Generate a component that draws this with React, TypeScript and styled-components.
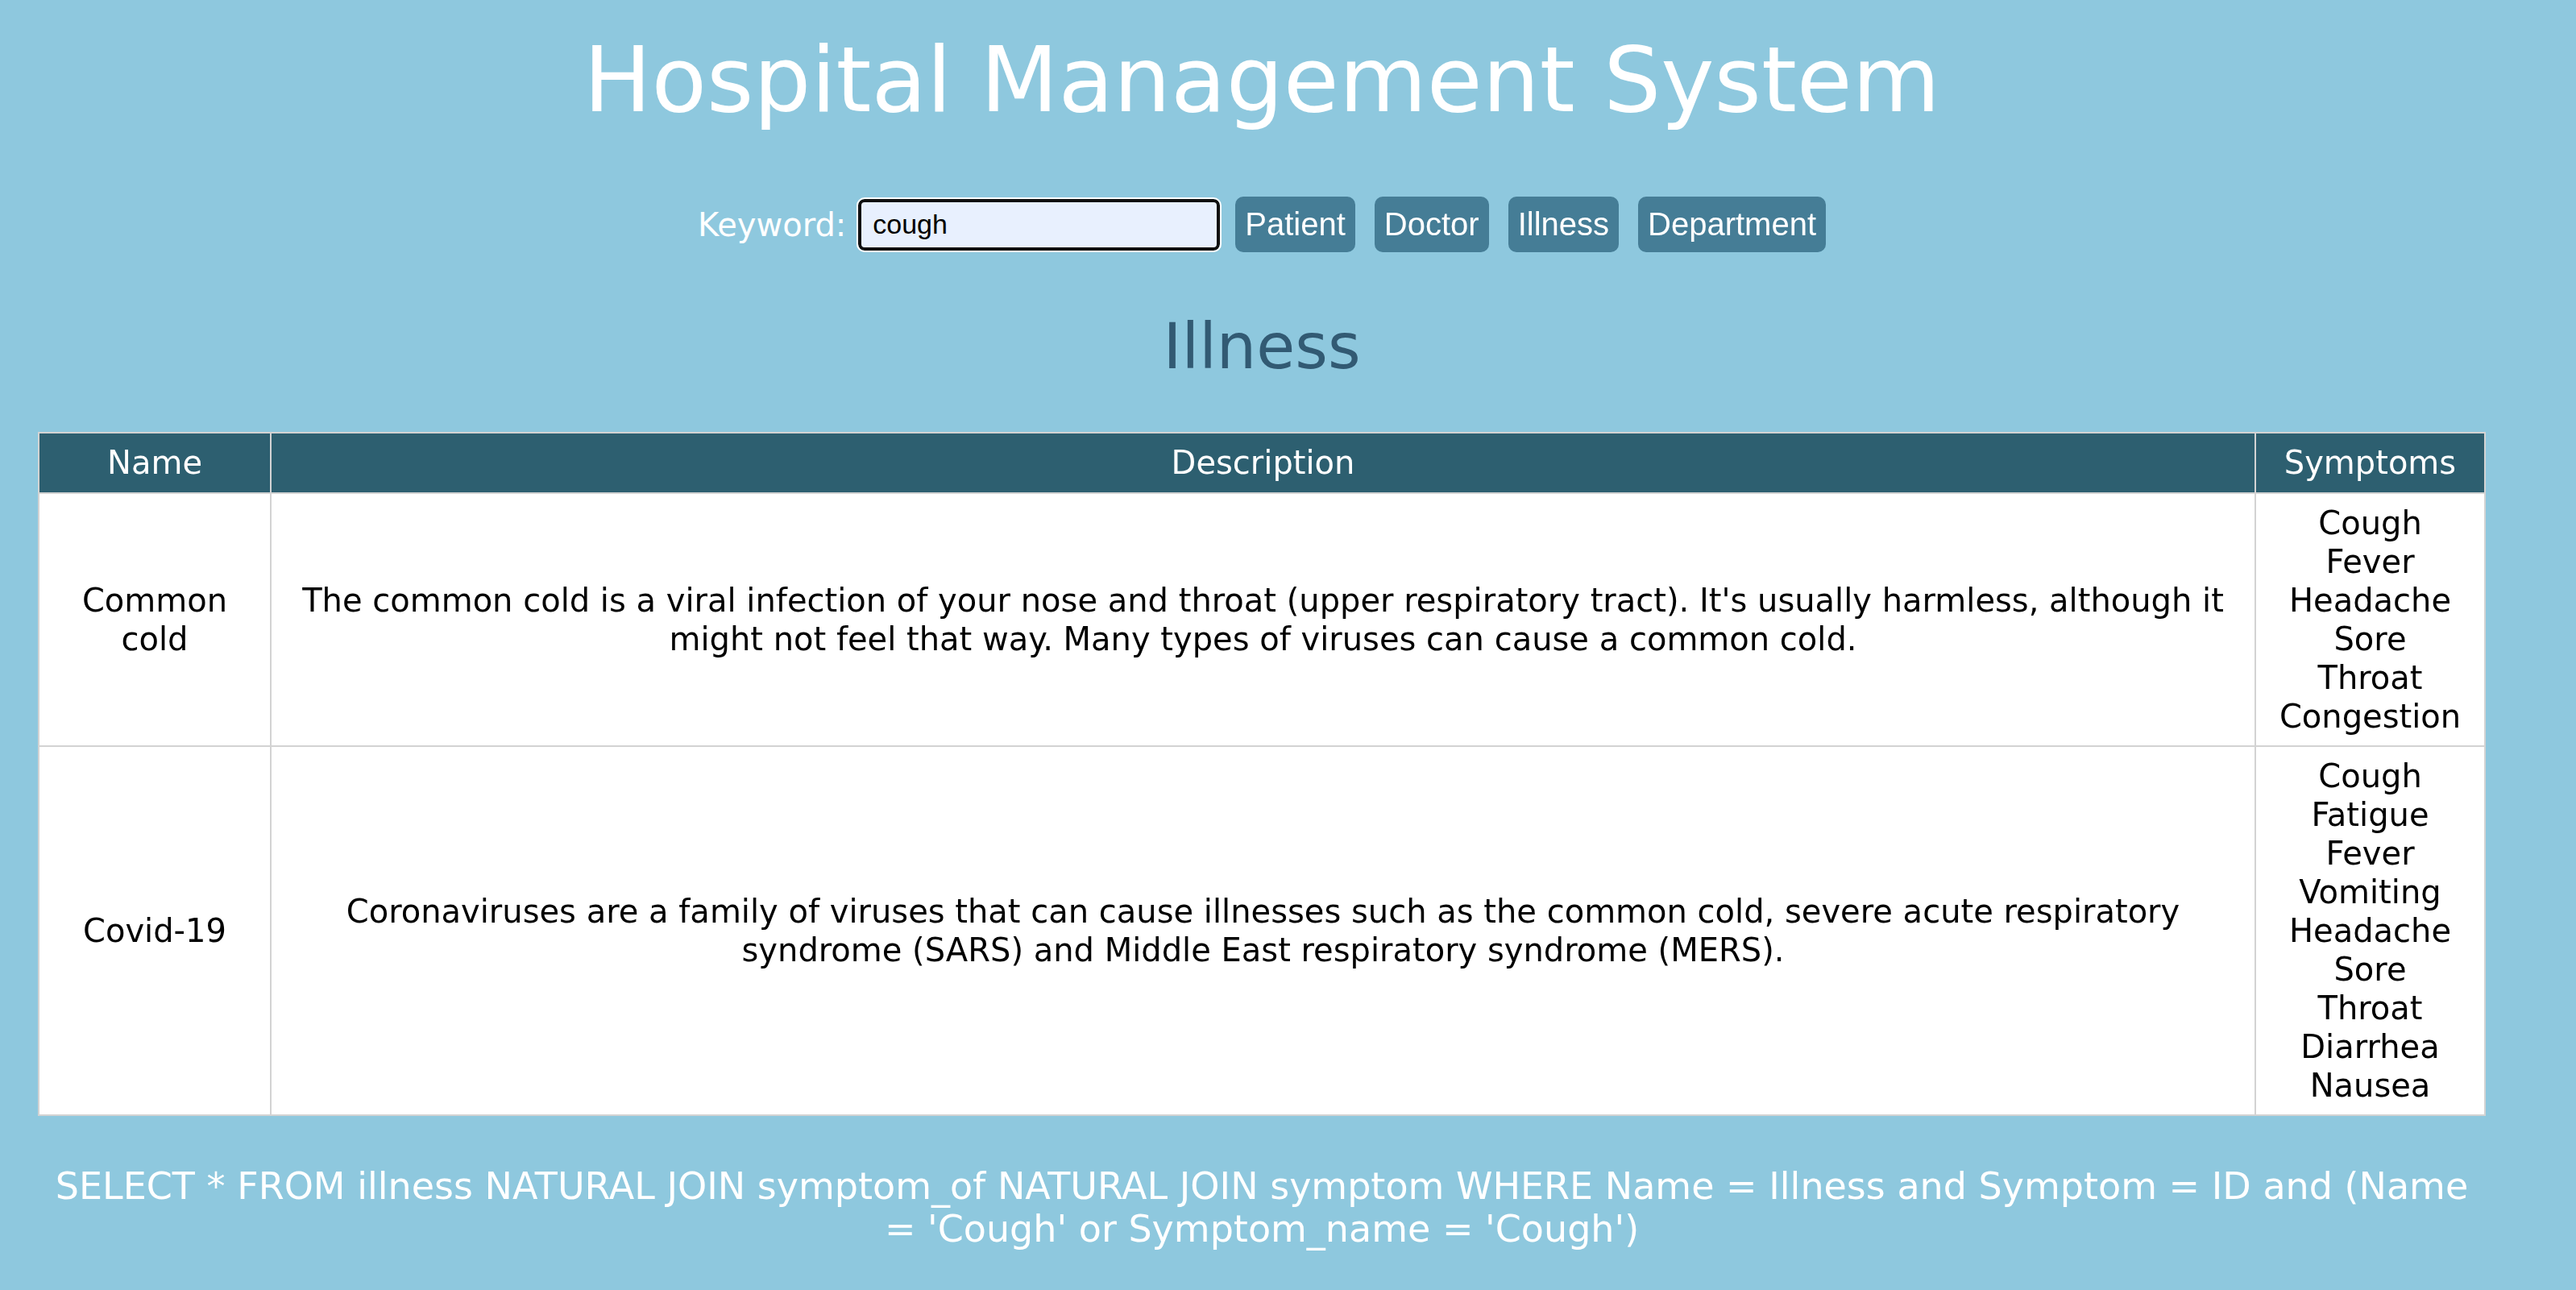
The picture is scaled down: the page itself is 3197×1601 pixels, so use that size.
import React from "react";
import styled, { createGlobalStyle } from "styled-components";

const GlobalStyle = createGlobalStyle`
  html, body { margin: 0; padding: 0; }
  body {
    background: #8ec8de;
    font-family: "DejaVu Sans", Verdana, sans-serif;
    width: 3197px;
    min-height: 1601px;
  }
`;

const Page = styled.div`
  width: 3038px;
  margin-left: 47px;
  display: flex;
  flex-direction: column;
  align-items: center;
`;

const Title = styled.h1`
  margin: 34px 0 0;
  font-size: 112px;
  line-height: 130px;
  font-weight: normal;
  color: #ffffff;
  white-space: nowrap;
`;

const SearchBar = styled.form`
  margin-top: 80px;
  display: flex;
  align-items: center;
  height: 69px;
`;

const Label = styled.label`
  font-size: 40px;
  color: #ffffff;
  margin-right: 15px;
`;

const Input = styled.input`
  box-sizing: border-box;
  width: 449px;
  height: 64px;
  border: 4px solid #101010;
  border-radius: 8px;
  outline: 2px solid #ffffff;
  outline-offset: 0;
  background: #e8f0fe;
  font-family: "Liberation Sans", Arial, sans-serif;
  font-size: 34px;
  padding: 0 14px;
  color: #000;
  margin-right: 19px;
`;

const Button = styled.button<{ $last?: boolean }>`
  font-family: "Liberation Sans", Arial, sans-serif;
  font-size: 40px;
  line-height: 46px;
  padding: 11px 12px 12px;
  border: none;
  border-radius: 10px;
  background: #457d96;
  color: #ffffff;
  margin-right: ${(p) => (p.$last ? "0" : "24px")};
  cursor: pointer;
`;

const Section = styled.h2`
  margin: 72px 0 0;
  font-size: 78px;
  line-height: 91px;
  font-weight: normal;
  color: #325a73;
`;

const Table = styled.table`
  margin-top: 60px;
  width: 3038px;
  table-layout: fixed;
  border-collapse: collapse;
  border: 2px solid #d3d3d3;
  font-size: 40px;
  line-height: 48px;
`;

const HeadCell = styled.th<{ $w?: number }>`
  ${(p) => (p.$w ? `width: ${p.$w}px;` : "")}
  background: #2d5f70;
  color: #ffffff;
  font-weight: normal;
  padding: 12px 14px 13px;
  border: 2px solid #d3d3d3;
  text-align: center;
`;

const Cell = styled.td`
  background: #ffffff;
  color: #000000;
  padding: 12px 14px;
  border: 2px solid #d3d3d3;
  text-align: center;
  vertical-align: middle;
`;

const Query = styled.p`
  margin: 61px 0 0;
  font-size: 46px;
  line-height: 53px;
  color: #ffffff;
  text-align: center;
  padding: 0 10px;
`;

const rows = [
  {
    name: "Common cold",
    desc:
      "The common cold is a viral infection of your nose and throat (upper respiratory tract). It's usually harmless, although it might not feel that way. Many types of viruses can cause a common cold.",
    symptoms: ["Cough", "Fever", "Headache", "Sore", "Throat", "Congestion"],
  },
  {
    name: "Covid-19",
    desc:
      "Coronaviruses are a family of viruses that can cause illnesses such as the common cold, severe acute respiratory syndrome (SARS) and Middle East respiratory syndrome (MERS).",
    symptoms: [
      "Cough",
      "Fatigue",
      "Fever",
      "Vomiting",
      "Headache",
      "Sore",
      "Throat",
      "Diarrhea",
      "Nausea",
    ],
  },
];

export default function App() {
  return (
    <>
      <GlobalStyle />
      <Page>
        <Title>Hospital Management System</Title>
        <SearchBar onSubmit={(e) => e.preventDefault()}>
          <Label htmlFor="kw">Keyword:</Label>
          <Input id="kw" defaultValue="cough" autoFocus />
          <Button type="button">Patient</Button>
          <Button type="button">Doctor</Button>
          <Button type="button">Illness</Button>
          <Button type="button" $last>
            Department
          </Button>
        </SearchBar>
        <Section>Illness</Section>
        <Table>
          <thead>
            <tr>
              <HeadCell $w={258}>Name</HeadCell>
              <HeadCell>Description</HeadCell>
              <HeadCell $w={255}>Symptoms</HeadCell>
            </tr>
          </thead>
          <tbody>
            {rows.map((r) => (
              <tr key={r.name}>
                <Cell>{r.name}</Cell>
                <Cell>{r.desc}</Cell>
                <Cell>
                  {r.symptoms.map((s, i) => (
                    <React.Fragment key={i}>
                      {s}
                      {i < r.symptoms.length - 1 && <br />}
                    </React.Fragment>
                  ))}
                </Cell>
              </tr>
            ))}
          </tbody>
        </Table>
        <Query>
          SELECT * FROM illness NATURAL JOIN symptom_of NATURAL JOIN symptom WHERE Name = Illness and Symptom = ID and (Name = 'Cough' or Symptom_name = 'Cough')
        </Query>
      </Page>
    </>
  );
}
